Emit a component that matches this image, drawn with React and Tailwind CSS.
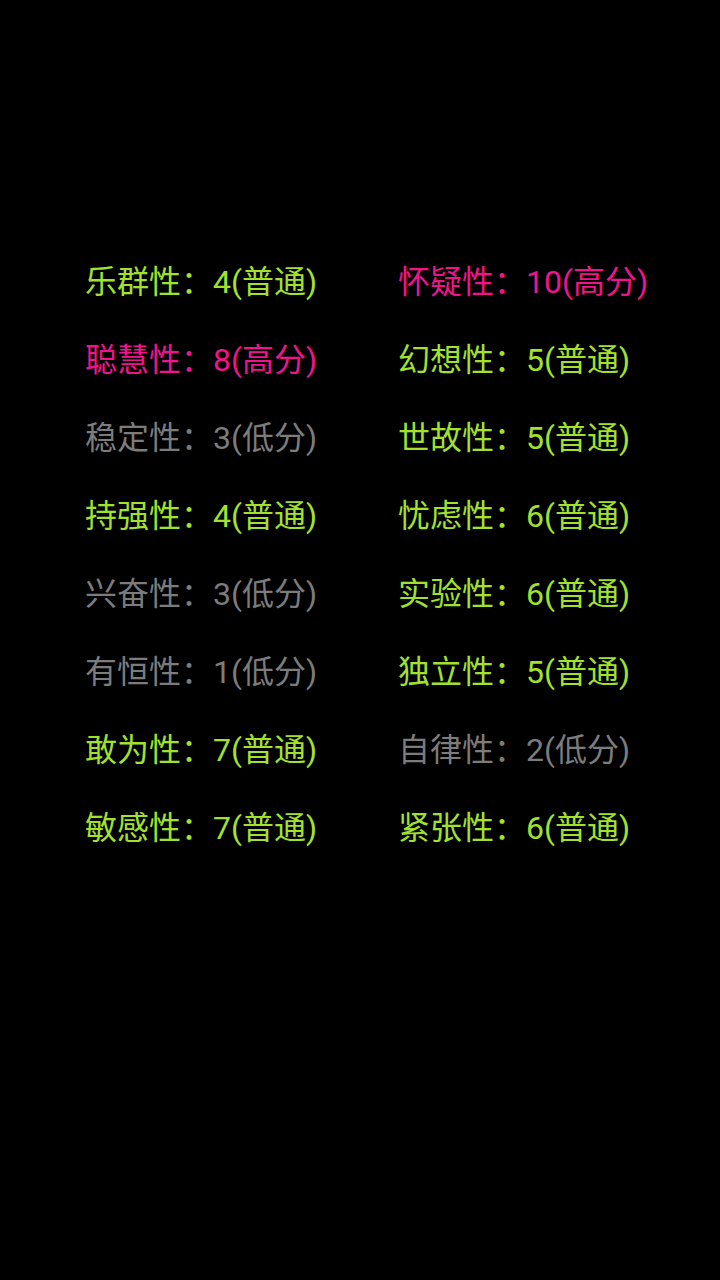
const G = "text-[#a2e22c]";
const P = "text-[#f0148c]";
const N = "text-[#7c7c7c]";

const rows = [
  ["乐群性", "4(普通)", G, "怀疑性", "10(高分)", P],
  ["聪慧性", "8(高分)", P, "幻想性", "5(普通)", G],
  ["稳定性", "3(低分)", N, "世故性", "5(普通)", G],
  ["持强性", "4(普通)", G, "忧虑性", "6(普通)", G],
  ["兴奋性", "3(低分)", N, "实验性", "6(普通)", G],
  ["有恒性", "1(低分)", N, "独立性", "5(普通)", G],
  ["敢为性", "7(普通)", G, "自律性", "2(低分)", N],
  ["敏感性", "7(普通)", G, "紧张性", "6(普通)", G],
];

export default function App() {
  return (
    <div
      className="w-[720px] h-[1280px] bg-black pt-[243px] pl-[85px]"
      style={{ fontFamily: "Roboto, 'Noto Sans CJK SC', sans-serif" }}
    >
      <div className="grid grid-cols-[313px_auto] text-[32px] leading-[78px] whitespace-nowrap">
        {rows.map((r, i) => (
          <>
            <div key={"a" + i} className={r[2]}>{r[0]}：{r[1]}</div>
            <div key={"b" + i} className={r[5]}>{r[3]}：{r[4]}</div>
          </>
        ))}
      </div>
    </div>
  );
}
